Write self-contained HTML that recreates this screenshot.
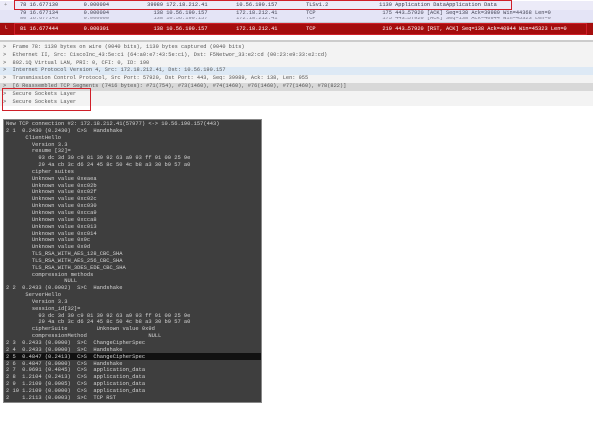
<!DOCTYPE html>
<html><head><style>
body{margin:0;width:600px;height:421px;background:#fff;position:relative;overflow:hidden;font-family:"Liberation Mono",monospace;}
.t{position:absolute;white-space:pre;font-size:5.3px;line-height:7px;}
.row{position:absolute;left:0;width:593px;height:7px;}
.box{position:absolute;border:1.5px solid #d0202a;box-sizing:border-box;}
.term{position:absolute;left:3px;top:119px;width:259px;height:284px;background:#3e3e3e;border:1px solid #888;box-sizing:border-box;}
.term .t{color:#d4d4d4;font-size:5.4px;line-height:6.85px;left:2px;}
</style></head><body>
<!-- packet list -->
<div class="row" style="top:1px;height:9px;background:#ecebf8"></div>
<div class="row" style="top:10px;height:7px;background:#e4e4f6"></div>
<div class="row" style="top:17px;height:5px;background:#e4e4f6;overflow:hidden"><div class="t" style="top:-2px;left:20px;color:#778">80 16.677143        0.000000              138 10.56.190.157         172.18.212.41         TCP                     175 443→57920 [ACK] Seq=138 Ack=40944 Win=45323 Len=0</div></div>
<div class="row" style="top:22px;height:1px;background:#c8c8d0"></div>
<div class="row" style="top:23px;height:12px;background:#a50d0d"></div>
<div style="position:absolute;left:0;top:35px;width:593px;height:5px;background:#fff"></div>
<div style="position:absolute;left:0;top:40px;width:593px;height:2px;background:#ccc"></div>
<div class="t" style="top:2px;left:4px;color:#888">+</div>
<div class="t" style="top:26px;left:4px;color:#fff">└</div>
<div class="t" style="top:2px;left:20px;color:#334">78 16.677130        0.000004            39989 172.18.212.41         10.56.190.157         TLSv1.2                1130 Application DataApplication Data</div>
<div class="t" style="top:10px;left:20px;color:#445">79 16.677134        0.000004              138 10.56.190.157         172.18.212.41         TCP                     175 443→57920 [ACK] Seq=138 Ack=39989 Win=44368 Len=0</div>
<div class="t" style="top:25.5px;left:20px;color:#fff">81 16.677444        0.000301              138 10.56.190.157         172.18.212.41         TCP                     219 443→57920 [RST, ACK] Seq=138 Ack=40944 Win=45323 Len=0</div>
<div class="box" style="left:14px;top:0px;width:498px;height:10px"></div>
<div class="box" style="left:14px;top:23px;width:573px;height:12px"></div>
<!-- details -->
<div style="position:absolute;left:0;top:42px;width:593px;height:64px;background:#f3f3f3"></div>
<div class="row" style="top:67px;height:8px;background:#dde9f5"></div>
<div class="row" style="top:83px;height:8px;background:#d8d8d8"></div>
<div class="t" style="top:44px;left:3px;color:#555;line-height:7.8px">&gt;  Frame 78: 1130 bytes on wire (9040 bits), 1130 bytes captured (9040 bits)
&gt;  Ethernet II, Src: CiscoInc_43:5e:c1 (64:a0:e7:43:5e:c1), Dst: F5Networ_33:e2:cd (00:23:e9:33:e2:cd)
&gt;  802.1Q Virtual LAN, PRI: 0, CFI: 0, ID: 190
&gt;  Internet Protocol Version 4, Src: 172.18.212.41, Dst: 10.56.190.157
&gt;  Transmission Control Protocol, Src Port: 57920, Dst Port: 443, Seq: 39989, Ack: 138, Len: 955
&gt;  [6 Reassembled TCP Segments (7416 bytes): #71(754), #73(1460), #74(1460), #76(1460), #77(1460), #78(822)]
&gt;  Secure Sockets Layer
&gt;  Secure Sockets Layer</div>
<div class="box" style="left:2px;top:88px;width:89px;height:23px"></div>
<!-- terminal -->
<div class="term">
<div style="position:absolute;left:0;top:233px;width:257px;height:7px;background:#111"></div>
<div class="t" style="top:1px">New TCP connection #2: 172.18.212.41(57977) &lt;-&gt; 10.56.190.157(443)
2 1  0.2430 (0.2430)  C&gt;S  Handshake
      ClientHello
        Version 3.3
        resume [32]=
          93 dc 3d 30 c9 81 39 92 63 a9 93 ff 91 00 25 9e
          29 4a cb 3c d6 24 45 8c 50 4c b8 a3 30 b9 57 a0
        cipher suites
        Unknown value 0xeaea
        Unknown value 0xc02b
        Unknown value 0xc02f
        Unknown value 0xc02c
        Unknown value 0xc030
        Unknown value 0xcca9
        Unknown value 0xcca8
        Unknown value 0xc013
        Unknown value 0xc014
        Unknown value 0x9c
        Unknown value 0x9d
        TLS_RSA_WITH_AES_128_CBC_SHA
        TLS_RSA_WITH_AES_256_CBC_SHA
        TLS_RSA_WITH_3DES_EDE_CBC_SHA
        compression methods
                  NULL
2 2  0.2433 (0.0002)  S&gt;C  Handshake
      ServerHello
        Version 3.3
        session_id[32]=
          93 dc 3d 30 c9 81 39 92 63 a9 93 ff 91 00 25 9e
          29 4a cb 3c d6 24 45 8c 50 4c b8 a3 30 b9 57 a0
        cipherSuite         Unknown value 0x9d
        compressionMethod                   NULL
2 3  0.2433 (0.0000)  S&gt;C  ChangeCipherSpec
2 4  0.2433 (0.0000)  S&gt;C  Handshake
2 5  0.4847 (0.2413)  C&gt;S  ChangeCipherSpec
2 6  0.4847 (0.0000)  C&gt;S  Handshake
2 7  0.9691 (0.4845)  C&gt;S  application_data
2 8  1.2104 (0.2413)  C&gt;S  application_data
2 9  1.2109 (0.0005)  C&gt;S  application_data
2 10 1.2109 (0.0000)  C&gt;S  application_data
2    1.2113 (0.0003)  S&gt;C  TCP RST</div>
</div>
</body></html>
